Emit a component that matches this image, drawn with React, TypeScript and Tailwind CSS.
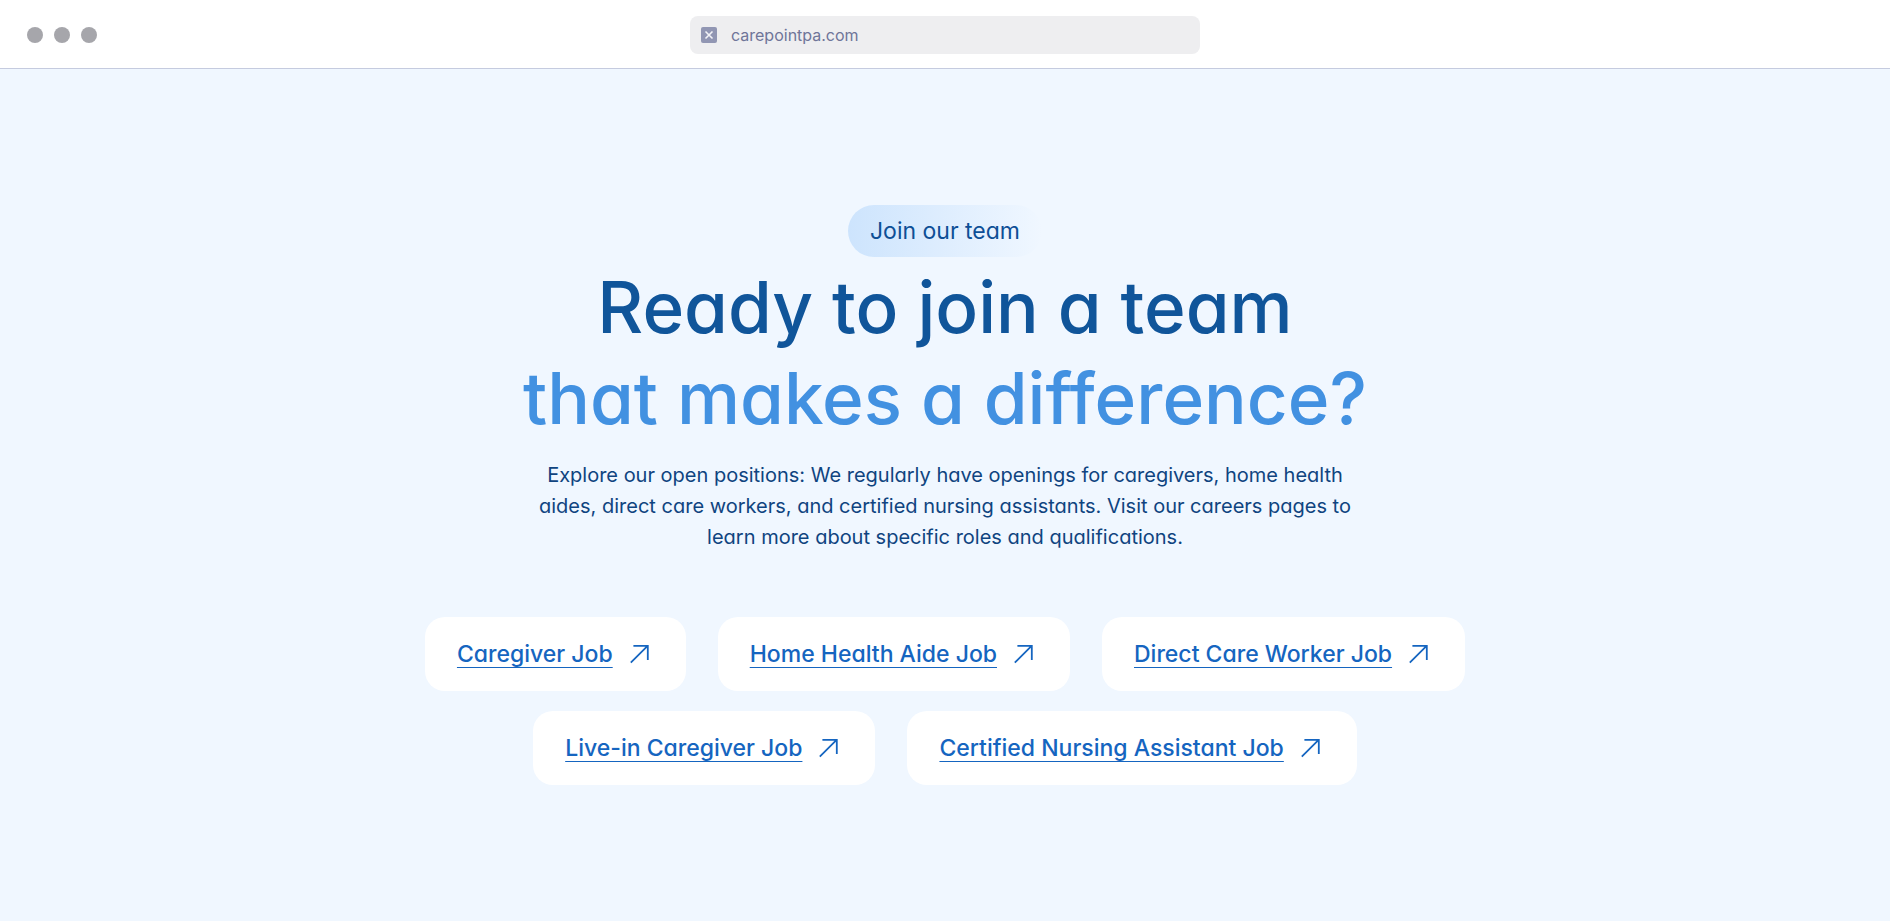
const jobs = [
  { label: "Caregiver Job", href: "#caregiver" },
  { label: "Home Health Aide Job", href: "#home-health-aide" },
  { label: "Direct Care Worker Job", href: "#direct-care-worker" },
  { label: "Live-in Caregiver Job", href: "#live-in-caregiver" },
  { label: "Certified Nursing Assistant Job", href: "#certified-nursing-assistant" },
]

function ArrowIcon() {
  return (
    <svg viewBox="0 0 24 24" fill="none" stroke="currentColor" strokeWidth="1.8" className="w-6 h-6 shrink-0" aria-hidden="true">
      <path d="M0.8 20.7 L17.6 3.9 M3.4 3.9 H17.8 V18" />
    </svg>
  )
}

function BrowserBar() {
  return (
    <header className="grid grid-cols-[1fr_minmax(0,510px)_1fr] items-center border-b border-[#c5cbdf] bg-white px-[27px] pt-4 pb-3.5">
      <div className="flex gap-[11px]">
        <span className="w-4 h-4 rounded-full bg-[#a6a6ab]" />
        <span className="w-4 h-4 rounded-full bg-[#a6a6ab]" />
        <span className="w-4 h-4 rounded-full bg-[#a6a6ab]" />
      </div>
      <div className="flex h-[38px] items-center gap-3.5 rounded-lg bg-[#eeeef0] px-[11px]">
        <svg viewBox="0 0 16 16" className="w-4 h-4 shrink-0" aria-hidden="true">
          <rect width="16" height="16" rx="2" fill="#9196b3" />
          <path d="M4.5 4.5 L11.5 11.5 M11.5 4.5 L4.5 11.5" stroke="#f3f3f7" strokeWidth="1.6" />
        </svg>
        <span className="text-base text-[#6f7599]">carepointpa.com</span>
      </div>
    </header>
  )
}

export default function App() {
  return (
    <div className="flex min-h-screen flex-col bg-[#f0f7ff] font-['Inter',sans-serif]">
      <BrowserBar />

      {/* cv11 = single-storey a */}
      <main className="flex flex-1 flex-col items-center justify-center px-6 py-12 text-center [font-feature-settings:'cv11']">
        <p className="rounded-full bg-linear-to-r from-[#cde4fd] to-[#f0f7ff] px-[22px] py-2.5 text-[23px] leading-8 text-[#0e4f96]">
          Join our team
        </p>

        <h1 className="mt-[5px] text-[71px] leading-[91px] font-medium text-[#10559a]">
          Ready to join a team
          <span className="block text-[#4291e1]">that makes a difference?</span>
        </h1>

        <p className="mt-4 max-w-[840px] text-xl leading-[31px] text-[#0f4480]">
          Explore our open positions: We regularly have openings for caregivers, home health aides, direct care
          workers, and certified nursing assistants. Visit our careers pages to learn more about specific roles and
          qualifications.
        </p>

        <ul className="mt-16 flex max-w-[1100px] flex-wrap justify-center gap-x-8 gap-y-5">
          {jobs.map((job) => (
            <li key={job.href}>
              <a
                href={job.href}
                className="flex items-center gap-[17px] rounded-[20px] bg-white px-8 py-[21px] text-[23px] leading-8 font-medium text-[#1565c0]"
              >
                <span className="underline decoration-1 underline-offset-[5px] [text-decoration-skip-ink:none]">
                  {job.label}
                </span>
                <ArrowIcon />
              </a>
            </li>
          ))}
        </ul>
      </main>
    </div>
  )
}
